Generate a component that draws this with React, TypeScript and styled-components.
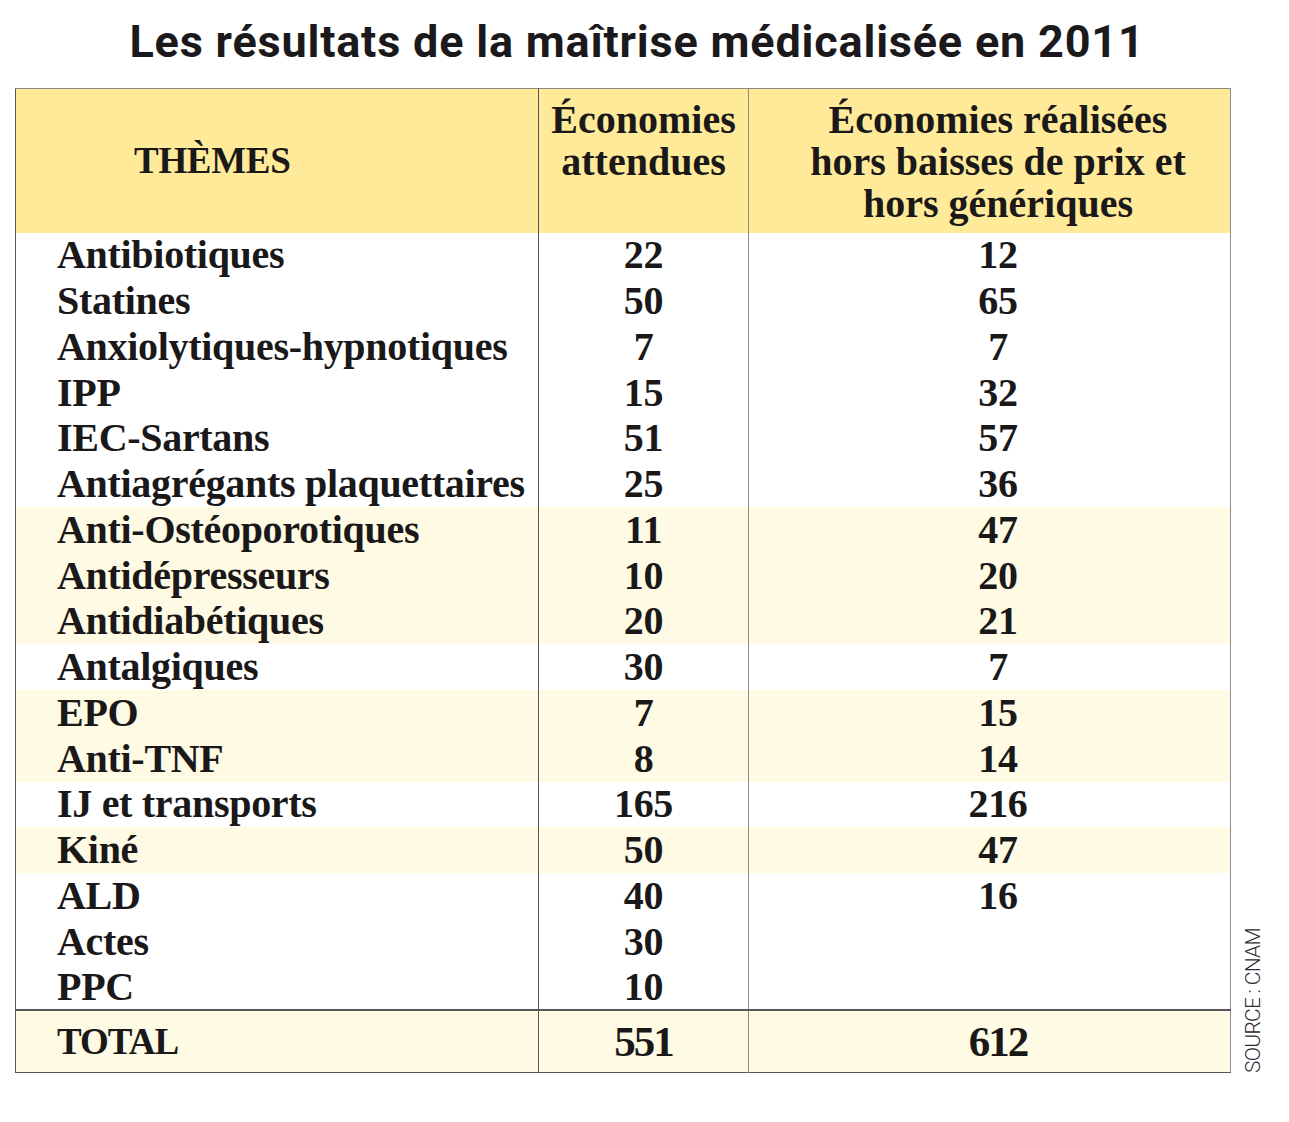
import React, { FC } from 'react';
import styled, { createGlobalStyle } from 'styled-components';

const GlobalStyle = createGlobalStyle`
    body {
        margin: 0;
        background: #ffffff;
        color: #1a1819;
    }
`;

const Page = styled.div`
    width: 1289px;
    padding: 14px 0 0 15px;
    box-sizing: border-box;
`;

const Title = styled.h1`
    margin: 0 0 19px 72px;
    width: 1100px;
    text-align: center;
    font-family: Roboto, 'Open Sans', sans-serif;
    font-weight: 700;
    font-size: 45px;
    line-height: 55px;
    letter-spacing: 0.8px;
    color: #1b191c;
`;

const Body = styled.div`
    display: flex;
    align-items: flex-end;
    gap: 12px;
`;

const Table = styled.table`
    border-collapse: collapse;
    width: 1215px;
    table-layout: fixed;
    font-family: 'Liberation Serif', 'Times New Roman', serif;
    font-weight: 700;
    color: #1a1819;
    border: 1px solid #58565a;
    border-top-color: #8c8a80;
    border-right-color: #8e8c8e;
`;

const HeadRow = styled.tr`
    background: #feea98;
    height: 144px;
`;

const HeadCell = styled.th<{ $align: 'left' | 'center'; $pad: number; $valign: 'top' | 'middle' }>`
    font-size: ${(p) => (p.$valign === 'top' ? '40px' : '37px')};
    line-height: 42px;
    font-weight: 700;
    text-align: ${(p) => p.$align};
    vertical-align: ${(p) => p.$valign};
    padding: ${(p) => (p.$valign === 'top' ? '10px' : '0')} 0 0 ${(p) => p.$pad}px;
    letter-spacing: ${(p) => (p.$valign === 'top' ? '0' : '-0.3px')};
`;

const Row = styled.tr<{ $shade?: boolean }>`
    height: 45.75px;
    background: ${(p) => (p.$shade ? '#fefae3' : '#ffffff')};
`;

const TotalRow = styled.tr`
    height: 62px;
    background: #fefae3;
    border-top: 2px solid #58565a;
`;

const NameCell = styled.td<{ $big?: boolean }>`
    padding: 0 0 0 41px;
    font-size: ${(p) => (p.$big ? '37px' : '40px')};
    letter-spacing: ${(p) => (p.$big ? '-1px' : '-0.3px')};
    white-space: nowrap;
    vertical-align: middle;
    line-height: 40px;
`;

const NumCell = styled.td<{ $pad?: number; $big?: boolean }>`
    padding: 0 0 0 ${(p) => p.$pad ?? 0}px;
    text-align: center;
    font-size: ${(p) => (p.$big ? '43px' : '40px')};
    letter-spacing: ${(p) => (p.$big ? '-2px' : '-0.3px')};
    vertical-align: middle;
    line-height: 40px;
`;

const Col = styled.col<{ $w: number }>`
    width: ${(p) => p.$w}px;
`;

const ColTwo = styled(NumCell)`
    border-left: 1px solid #58565a;
`;

const ColThree = styled(NumCell)`
    border-left: 1px solid #8e8c8e;
`;

const HeadTwo = styled(HeadCell)`
    border-left: 1px solid #58565a;
`;

const HeadThree = styled(HeadCell)`
    border-left: 1px solid #8e8c8e;
`;

const Source = styled.div`
    writing-mode: vertical-rl;
    transform: rotate(180deg);
    font-family: Roboto, 'DejaVu Sans', sans-serif;
    font-weight: 300;
    font-size: 21px;
    line-height: 20px;
    letter-spacing: -0.7px;
    color: #2d2b2e;
`;

type Theme = { name: string; expected: string; realised: string; shade?: boolean };

const themes: Theme[] = [
    { name: 'Antibiotiques', expected: '22', realised: '12' },
    { name: 'Statines', expected: '50', realised: '65' },
    { name: 'Anxiolytiques-hypnotiques', expected: '7', realised: '7' },
    { name: 'IPP', expected: '15', realised: '32' },
    { name: 'IEC-Sartans', expected: '51', realised: '57' },
    { name: 'Antiagrégants plaquettaires', expected: '25', realised: '36' },
    { name: 'Anti-Ostéoporotiques', expected: '11', realised: '47', shade: true },
    { name: 'Antidépresseurs', expected: '10', realised: '20', shade: true },
    { name: 'Antidiabétiques', expected: '20', realised: '21', shade: true },
    { name: 'Antalgiques', expected: '30', realised: '7' },
    { name: 'EPO', expected: '7', realised: '15', shade: true },
    { name: 'Anti-TNF', expected: '8', realised: '14', shade: true },
    { name: 'IJ et transports', expected: '165', realised: '216' },
    { name: 'Kiné', expected: '50', realised: '47', shade: true },
    { name: 'ALD', expected: '40', realised: '16' },
    { name: 'Actes', expected: '30', realised: '' },
    { name: 'PPC', expected: '10', realised: '' },
];

const App: FC = () => {
    return (
        <>
            <GlobalStyle />
            <Page>
                <Title>Les résultats de la maîtrise médicalisée en 2011</Title>
                <Body>
                    <Table>
                        <colgroup>
                            <Col $w={523} />
                            <Col $w={210} />
                            <Col $w={482} />
                        </colgroup>
                        <thead>
                            <HeadRow>
                                <HeadCell $align="left" $pad={118} $valign="middle">
                                    THÈMES
                                </HeadCell>
                                <HeadTwo $align="center" $pad={0} $valign="top">
                                    Économies
                                    <br />
                                    attendues
                                </HeadTwo>
                                <HeadThree $align="center" $pad={17} $valign="top">
                                    Économies réalisées
                                    <br />
                                    hors baisses de prix et
                                    <br />
                                    hors génériques
                                </HeadThree>
                            </HeadRow>
                        </thead>
                        <tbody>
                            {themes.map((t) => (
                                <Row key={t.name} $shade={t.shade}>
                                    <NameCell>{t.name}</NameCell>
                                    <ColTwo>{t.expected}</ColTwo>
                                    <ColThree $pad={17}>{t.realised}</ColThree>
                                </Row>
                            ))}
                            <TotalRow>
                                <NameCell $big>TOTAL</NameCell>
                                <ColTwo $big>551</ColTwo>
                                <ColThree $big $pad={17}>
                                    612
                                </ColThree>
                            </TotalRow>
                        </tbody>
                    </Table>
                    <Source>SOURCE : CNAM</Source>
                </Body>
            </Page>
        </>
    );
};

export default App;
